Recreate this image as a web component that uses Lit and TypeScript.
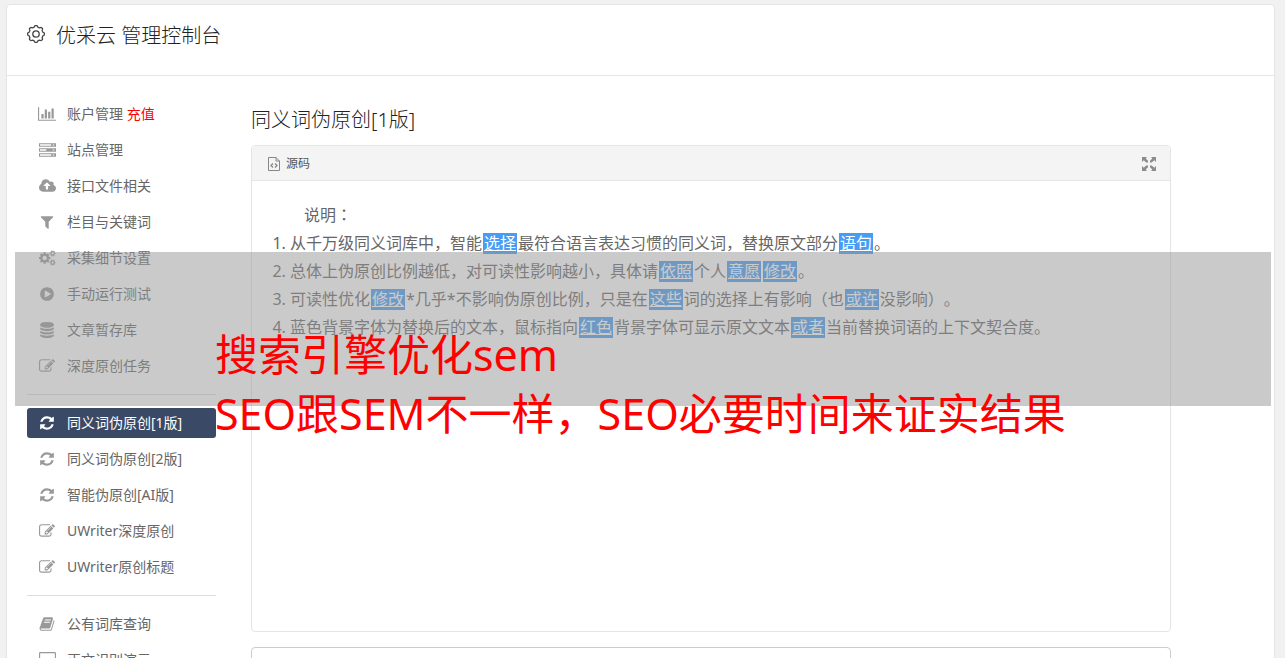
import { LitElement, html, css, svg } from "lit";
import { customElement } from "lit/decorators.js";
import { classMap } from "lit/directives/class-map.js";

const icon = (w: number, body: unknown) =>
  html`<svg class="glyph" viewBox="0 0 ${w} 1792" width=${Math.round((w / 1792) * 16)} height="16" aria-hidden="true">${body}</svg>`;

const editIcon = icon(1792, svg`<path d="M888 1184l116-116-152-152-116 116v56h96v96h56zm440-720q-16-16-33 1l-350 350q-17 17-1 33t33-1l350-350q17-17 1-33zm80 594v190q0 119-84.5 203.5t-203.5 84.5h-832q-119 0-203.5-84.5t-84.5-203.5v-832q0-119 84.5-203.5t203.5-84.5h832q63 0 117 25 15 7 18 23 3 17-9 29l-49 49q-14 14-32 8-23-6-45-6h-832q-66 0-113 47t-47 113v832q0 66 47 113t113 47h832q66 0 113-47t47-113v-126q0-13 9-22l64-64q15-15 35-7t20 29zm-96-738l288 288-672 672h-288v-288zm444 132l-92 92-288-288 92-92q28-28 68-28t68 28l152 152q28 28 28 68t-28 68z"/>`);

const refreshIcon = icon(1792, svg`<path d="M1639 1056q0 5-1 7-64 268-268 434.5t-478 166.5q-146 0-282.5-55t-243.5-157l-129 129q-19 19-45 19t-45-19-19-45v-448q0-26 19-45t45-19h448q26 0 45 19t19 45-19 45l-137 137q71 66 161 102t187 36q134 0 250-65t186-179q11-17 53-117 8-23 30-23h192q13 0 22.5 9.5t9.5 22.5zm25-800v448q0 26-19 45t-45 19h-448q-26 0-45-19t-19-45 19-45l138-138q-148-137-349-137-134 0-250 65t-186 179q-11 17-53 117-8 23-30 23h-199q-13 0-22.5-9.5t-9.5-22.5v-7q65-268 270-434.5t480-166.5q146 0 284 55.5t245 156.5l130-129q19-19 45-19t45 19 19 45z"/>`);

const chartIcon = icon(2048, svg`<path d="M640 896v512h-256v-512h256zm384-512v1024h-256v-1024h256zm1024 1152v128h-2048v-1536h128v1408h1920zm-640-896v768h-256v-768h256zm384-384v1152h-256v-1152h256z"/>`);

const serverIcon = icon(1904, svg`<path fill-rule="evenodd" d="M0 128h1904v416h-1904zM112 240v192h1250v-192zM1530 270v130h190v-130zM0 688h1904v416h-1904zM112 800v192h700v-192zM1530 830v130h190v-130zM0 1248h1904v416h-1904zM112 1360v192h1250v-192zM1530 1390v130h190v-130z"/>`);

const cloudIcon = icon(1920, svg`<path d="M1280 864q0-14-9-23l-352-352q-9-9-23-9t-23 9l-351 351q-10 12-10 24 0 14 9 23t23 9h224v352q0 13 9.500 22.500t22.500 9.500h192q13 0 22.500-9.500t9.500-22.500v-352h224q13 0 22.500-9.500t9.500-22.500zm640 288q0 159-112.500 271.500t-271.500 112.500h-1088q-185 0-316.500-131.500t-131.500-316.500q0-130 70-240t188-165q-2-30-2-43 0-212 150-362t362-150q156 0 285.500 87t188.500 231q71-62 166-62 106 0 181 75t75 181q0 76-41 138 130 31 213.500 135.500t83.500 238.500z"/>`);

const filterIcon = icon(1792, svg`<path d="M1595 295q17 41-14 70l-493 493v742q0 42-39 59-13 5-25 5-27 0-45-19l-256-256q-19-19-19-45v-486l-493-493q-31-29-14-70 17-39 59-39h1280q42 0 59 39z"/>`);

const smallGear = (cy: number) => svg`<g fill="none" stroke="currentColor">
  <circle cx="1536" cy=${cy} r="200" stroke-width="140"/>
  <circle cx="1536" cy=${cy} r="305" stroke-width="110" stroke-dasharray="150 169.400" stroke-dashoffset="75"/></g>`;

const cogsIcon = icon(1920, svg`<path d="M896 896q0-106-75-181t-181-75-181 75-75 181 75 181 181 75 181-75 75-181zm384-91v185q0 10-7 19.500t-16 10.500l-155 24q-11 35-32 76 34 48 90 115 7 11 7 20 0 12-7 19-23 30-82.500 89.500t-78.500 59.500q-11 0-21-7l-115-90q-37 19-77 31-11 108-23 155-7 24-30 24h-186q-11 0-20-7.500t-10-17.500l-23-153q-34-10-75-31l-118 89q-7 7-20 7-11 0-21-8-144-133-144-160 0-9 7-19 10-14 41-53t47-61q-23-44-35-82l-152-24q-10-1-17-9.500t-7-19.500v-185q0-10 7-19.500t16-10.500l155-24q11-35 32-76-34-48-90-115-7-11-7-20 0-12 7-20 22-30 82-89t79-59q11 0 21 7l115 90q34-18 77-32 11-108 23-154 7-24 30-24h186q11 0 20 7.500t10 17.500l23 153q34 10 75 31l118-89q8-7 20-7 11 0 21 8 144 133 144 160 0 8-7 19-12 16-42 54t-45 60q23 48 34 82l152 23q10 2 17 10.500t7 19.500z"/>${smallGear(384)}${smallGear(1408)}`);

const playIcon = icon(1792, svg`<path d="M896 128q209 0 385.500 103t279.500 279.500 103 385.500-103 385.500-279.500 279.500-385.500 103-385.500-103-279.500-279.500-103-385.500 103-385.500 279.500-279.500 385.500-103zm384 823q32-18 32-55t-32-55l-544-320q-31-19-64-1-32 19-32 56v640q0 37 32 56 16 8 32 8 17 0 32-9z"/>`);

const databaseIcon = icon(1792, svg`<path d="M896 768q237 0 443-43t325-127v170q0 69-103 128t-280 93.500-385 34.500-385-34.500-280-93.500-103-128v-170q119 84 325 127t443 43zm0 768q237 0 443-43t325-127v170q0 69-103 128t-280 93.500-385 34.500-385-34.500-280-93.500-103-128v-170q119 84 325 127t443 43zm0-384q237 0 443-43t325-127v170q0 69-103 128t-280 93.500-385 34.500-385-34.500-280-93.500-103-128v-170q119 84 325 127t443 43zm0-1152q208 0 385 34.500t280 93.500 103 128v128q0 69-103 128t-280 93.500-385 34.500-385-34.500-280-93.500-103-128v-128q0-69 103-128t280-93.500 385-34.500z"/>`);

const bookIcon = icon(1792, svg`<path d="M1703 478q40 57 18 129l-275 906q-19 64-76.500 107.500t-122.500 43.500h-923q-77 0-148.500-53.500t-99.500-131.500q-24-67-2-127 0-4 3-27t4-37q1-8-3-21.500t-3-19.500q2-11 8-21t16.500-23.500 16.500-23.500q23-38 45-91.500t30-91.500q3-10 .5-30t-.5-28q3-11 17-28t17-23q21-36 42-92t25-90q1-9-2.500-32t.5-28q4-13 22-30.500t22-22.500q19-26 42.500-84.500t27.500-96.500q1-8-3-25.500t-2-26.500q2-8 9-18t18-23 17-21q8-12 16.500-30.500t15-35 16-36 19.500-32 26.500-23.500 36-11.500 47.500 5.500l-1 3q38-9 51-9h761q74 0 114 56t18 130l-274 906q-36 119-71.500 153.500t-128.500 34.500h-869q-27 0-38 15-11 16-1 43 24 70 144 70h923q29 0 56-15.500t35-41.500l300-987q7-22 5-57 38 15 59 43zm-1064 2q-4 13 2 22.500t20 9.500h608q13 0 25.500-9.500t16.500-22.500l21-64q4-13-2-22.500t-20-9.500h-608q-13 0-25.500 9.500t-16.500 22.500zm-83 256q-4 13 2 22.500t20 9.500h608q13 0 25.500-9.500t16.500-22.500l21-64q4-13-2-22.500t-20-9.500h-608q-13 0-25.500 9.500t-16.500 22.500z"/>`);

const desktopIcon = icon(1920, svg`<path fill-rule="evenodd" d="M160 0h1600q160 0 160 160v1088q0 160-160 160h-560v180h160v140h-800v-140h160v-180h-560q-160 0-160-160v-1088q0-160 160-160zM180 128q-52 0-52 52v820h1664v-820q0-52-52-52z"/>`);

interface Entry {
  icon: unknown;
  label: string;
  extra?: string;
  active?: boolean;
}

const groups: Entry[][] = [
  [
    { icon: chartIcon, label: "账户管理", extra: "充值" },
    { icon: serverIcon, label: "站点管理" },
    { icon: cloudIcon, label: "接口文件相关" },
    { icon: filterIcon, label: "栏目与关键词" },
    { icon: cogsIcon, label: "采集细节设置" },
    { icon: playIcon, label: "手动运行测试" },
    { icon: databaseIcon, label: "文章暂存库" },
    { icon: editIcon, label: "深度原创任务" },
  ],
  [
    { icon: refreshIcon, label: "同义词伪原创[1版]", active: true },
    { icon: refreshIcon, label: "同义词伪原创[2版]" },
    { icon: refreshIcon, label: "智能伪原创[AI版]" },
    { icon: editIcon, label: "UWriter深度原创" },
    { icon: editIcon, label: "UWriter原创标题" },
  ],
  [
    { icon: bookIcon, label: "公有词库查询" },
    { icon: desktopIcon, label: "正文识别演示" },
  ],
];

@customElement("side-menu")
export class SideMenu extends LitElement {
  static styles = css`
    :host {
      display: block;
      font-size: 14px;
      line-height: 30px;
    }
    .group {
      list-style: none;
      margin: 0;
      padding: 0;
      display: grid;
      gap: 6px;
    }
    .group + .group {
      margin-top: 13px;
      padding-top: 13px;
      border-top: 1px solid #dddddd;
    }
    .link {
      display: flex;
      align-items: center;
      gap: 10px;
      height: 30px;
      padding: 0 10px;
      border-radius: 3px;
      color: #666666;
      text-decoration: none;
      white-space: nowrap;
    }
    .mark {
      display: flex;
      flex: none;
      justify-content: center;
      width: 20px;
      color: #999999;
    }
    .glyph {
      display: block;
      flex: none;
      fill: currentColor;
    }
    .extra {
      color: #ff0000;
    }
    .active {
      background: #3a4a66;
      color: #ffffff;
    }
    .active .mark {
      color: #ffffff;
    }
  `;

  render() {
    return html`<nav>
      ${groups.map(
        (group) => html`<ul class="group">
          ${group.map(
            (e) => html`<li>
              <a class=${classMap({ link: true, active: !!e.active })} href="#">
                <span class="mark">${e.icon}</span>
                <span>${e.label}${e.extra ? html` <span class="extra">${e.extra}</span>` : ""}</span>
              </a>
            </li>`
          )}
        </ul>`
      )}
    </nav>`;
  }
}

// Outline of the header cog: eight rounded lobes around the centre.
const cogOutline = (() => {
  const points: string[] = [];
  for (let i = 0; i < 96; i++) {
    const a = (i / 96) * Math.PI * 2;
    const r = 7.7 + 0.75 * Math.tanh(2 * Math.cos(8 * a));
    points.push(`${(9 + r * Math.cos(a)).toFixed(2)} ${(9 + r * Math.sin(a)).toFixed(2)}`);
  }
  return `M${points.join("L")}Z`;
})();

// Words between braces were swapped by the rewriter and are marked.
const rules = [
  "从千万级同义词库中，智能{选择}最符合语言表达习惯的同义词，替换原文部分{语句}。",
  "总体上伪原创比例越低，对可读性影响越小，具体请{依照}个人{意愿}{修改}。",
  "可读性优化{修改}*几乎*不影响伪原创比例，只是在{这些}词的选择上有影响（也{或许}没影响）。",
  "蓝色背景字体为替换后的文本，鼠标指向{红色}背景字体可显示原文文本{或者}当前替换词语的上下文契合度。",
];

const marked = (line: string) =>
  line.split(/[{}]/).map((part, i) => (i % 2 ? html`<span class="swap">${part}</span>` : part));

@customElement("app-root")
export class AppRoot extends LitElement {
  static styles = css`
    :host {
      display: block;
      position: relative;
      box-sizing: border-box;
      height: 100vh;
      overflow: hidden;
      padding: 4px 10px 0 6px;
      background: #f1f1f1;
      color: #666666;
      font-family: "Noto Sans", "Noto Sans CJK SC", sans-serif;
      text-spacing-trim: space-all;
    }
    .mid {
      font-family: "Noto Sans CJK TC", sans-serif;
      line-height: 1;
    }
    .card {
      background: #ffffff;
      border: 1px solid #e5e5e5;
      border-radius: 4px;
      min-height: 100vh;
    }
    .top {
      display: flex;
      align-items: flex-start;
      gap: 11px;
      padding: 16px 20px 24px;
      border-bottom: 1px solid #e5e5e5;
      color: #333333;
    }
    .cog {
      flex: none;
      margin-top: 4px;
      fill: none;
      stroke: #444444;
    }
    .heading {
      margin: 0;
      font-size: 20px;
      line-height: 30px;
      font-weight: 300;
      color: #222222;
    }
    .columns {
      display: grid;
      grid-template-columns: 189px minmax(0, 1fr);
      gap: 35px;
      padding: 23px 103px 0 20px;
    }
    .content {
      display: grid;
      align-content: start;
      padding-top: 6px;
    }
    .panel {
      margin-top: 10px;
      border: 1px solid #e5e5e5;
      border-radius: 4px;
      overflow: hidden;
    }
    .bar {
      display: flex;
      align-items: center;
      justify-content: space-between;
      box-sizing: border-box;
      height: 35px;
      padding: 2px 14px 0 16px;
      background: #f4f4f4;
      border-bottom: 1px solid #e5e5e5;
    }
    .tool {
      display: flex;
      align-items: center;
      gap: 6px;
      padding: 0;
      border: 0;
      background: none;
      color: #555555;
      font-family: inherit;
      font-size: 12px;
      line-height: 18px;
    }
    .text {
      min-height: 410px;
      padding: 20px;
      font-size: 16px;
      line-height: 28px;
    }
    .lead {
      margin: 0;
      text-indent: 2em;
    }
    .rules {
      margin: 0;
      padding-left: 18px;
    }
    .swap {
      margin: 0 1px;
      padding: 0 1px;
      background: linear-gradient(#469df5, #469df5) center / 100% 21px no-repeat;
      color: #ffffff;
      text-decoration: underline;
    }
    .input {
      display: block;
      box-sizing: border-box;
      width: 100%;
      height: 120px;
      margin-top: 15px;
      border: 1px solid #cccccc;
      border-radius: 4px;
      resize: none;
    }
    .banner {
      position: absolute;
      top: 252px;
      left: 15px;
      right: 14px;
      height: 154px;
      background: rgba(150, 150, 150, 0.5);
    }
    .caption {
      position: absolute;
      top: 325px;
      left: 215px;
      margin: 0;
      color: #ff0000;
      font-size: 43px;
      line-height: 59px;
      white-space: nowrap;
    }
  `;

  render() {
    return html`
      <div class="card">
        <header class="top">
          <svg class="cog" width="18" height="18" viewBox="0 0 18 18" aria-hidden="true">
            <path d=${cogOutline} stroke-width="1.3" />
            <circle cx="9" cy="9" r="3.2" stroke-width="1.3" />
          </svg>
          <h1 class="heading">优采云 管理控制台</h1>
        </header>
        <div class="columns">
          <side-menu></side-menu>
          <main class="content">
            <h2 class="heading">同义词伪原创[1版]</h2>
            <section class="panel">
              <div class="bar">
                <button class="tool" type="button">
                  <svg width="12" height="14" viewBox="0 0 12 14" fill="none" stroke="#888888" aria-hidden="true">
                    <path d="M1 .5h7l3.500 3.500v9.500h-11v-13zM8 .5v3.500h3.500" />
                    <path d="M5 6.500l-2 2 2 2M7 6.500l2 2-2 2" stroke-width="1.3" />
                  </svg>
                  源码
                </button>
                <button class="tool" type="button" aria-label="全屏">
                  <svg width="14" height="14" viewBox="0 0 14 14" fill="#8c8c8c" aria-hidden="true">
                    <path d="M0 0h5L3.700 1.500 6 3.800v1.700H4.300L1.700 3.200 0 5zM14 0v5l-1.700-1.800-2.600 2.300H8V3.800l2.300-2.300L9 0zM0 14V9l1.700 1.800L4.300 8.500H6v1.700l-2.300 2.300L5 14zM14 14H9l1.300-1.500L8 10.200V8.500h1.700l2.600 2.300L14 9z" />
                  </svg>
                </button>
              </div>
              <div class="text">
                <p class="lead">说明<span class="mid">：</span></p>
                <ol class="rules">
                  ${rules.map((line) => html`<li>${marked(line)}</li>`)}
                </ol>
              </div>
            </section>
            <textarea class="input" aria-label="原文"></textarea>
          </main>
        </div>
      </div>
      <div class="banner"></div>
      <p class="caption">搜索引擎优化sem<br />SEO跟SEM不一样，SEO必要时间来证实结果</p>
    `;
  }
}
